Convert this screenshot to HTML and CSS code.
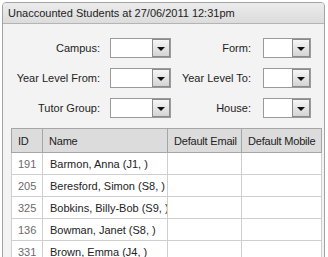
FILE: index.html
```html
<!DOCTYPE html>
<html>
<head>
<meta charset="utf-8">
<link rel="stylesheet" href="styles.css">
</head>
<body>
<div class="panel">
  <div class="panel-header">Unaccounted Students at 27/06/2011 12:31pm</div>
  <div class="panel-body">
    <div class="filters">
      <label class="lbl">Campus:</label>
      <div class="combo wide"><span class="field"></span><span class="btn"><span class="tri"></span></span></div>
      <label class="lbl">Form:</label>
      <div class="combo narrow"><span class="field"></span><span class="btn"><span class="tri"></span></span></div>

      <label class="lbl">Year Level From:</label>
      <div class="combo wide"><span class="field"></span><span class="btn"><span class="tri"></span></span></div>
      <label class="lbl">Year Level To:</label>
      <div class="combo narrow"><span class="field"></span><span class="btn"><span class="tri"></span></span></div>

      <label class="lbl">Tutor Group:</label>
      <div class="combo wide"><span class="field"></span><span class="btn"><span class="tri"></span></span></div>
      <label class="lbl">House:</label>
      <div class="combo narrow"><span class="field"></span><span class="btn"><span class="tri"></span></span></div>
    </div>

    <table class="grid">
      <colgroup>
        <col class="c-id"><col class="c-name"><col class="c-email"><col class="c-mobile">
      </colgroup>
      <thead>
        <tr><th>ID</th><th>Name</th><th>Default Email</th><th>Default Mobile</th></tr>
      </thead>
      <tbody>
        <tr><td class="id">191</td><td>Barmon, Anna (J1, )</td><td></td><td></td></tr>
        <tr><td class="id">205</td><td>Beresford, Simon (S8, )</td><td></td><td></td></tr>
        <tr><td class="id">325</td><td>Bobkins, Billy-Bob (S9, )</td><td></td><td></td></tr>
        <tr><td class="id">136</td><td>Bowman, Janet (S8, )</td><td></td><td></td></tr>
        <tr><td class="id">331</td><td>Brown, Emma (J4, )</td><td></td><td></td></tr>
      </tbody>
    </table>
  </div>
</div>
</body>
</html>
```

FILE: styles.css
```css
html, body {
  margin: 0;
  padding: 0;
  background: #ffffff;
}

body {
  font-family: "Liberation Sans", Arial, sans-serif;
  font-size: 11px;
  color: #222;
}

.panel {
  margin: 2px 0 0 2px;
  width: 321px;
  border: 1px solid #a3a3a3;
  border-radius: 4px 4px 0 0;
  background: #f3f3f3;
  overflow: hidden;
}

.panel-header {
  height: 20px;
  line-height: 21px;
  padding-left: 5px;
  background: linear-gradient(#ececec, #dcdcdc);
  border-bottom: 1px solid #b4b4b4;
  color: #222;
  font-size: 11px;
  white-space: nowrap;
}

.panel-body {
  padding: 14px 0 20px 8px;
}

.filters {
  display: grid;
  grid-template-columns: 89px 71px 80px 60px;
  grid-auto-rows: 20px;
  row-gap: 10px;
  align-items: center;
}

.lbl {
  text-align: right;
  white-space: nowrap;
  color: #222;
}

.combo {
  display: flex;
  height: 20px;
  box-sizing: border-box;
  border: 1px solid #9a9a9a;
  background: #fff;
}

.combo.wide {
  margin-left: 10px;
}

.combo.narrow {
  margin-left: 12px;
}

.combo .field {
  flex: 1;
}

.combo .btn {
  width: 16px;
  border: 1px solid #8a8a8a;
  background: linear-gradient(#f6f6f6, #d4d4d4);
  display: flex;
  align-items: center;
  justify-content: center;
}

.tri {
  width: 0;
  height: 0;
  border-left: 4px solid transparent;
  border-right: 4px solid transparent;
  border-top: 4px solid #111;
  margin-top: 2px;
}

.grid {
  margin-top: 10px;
  border-collapse: collapse;
  width: 310px;
  table-layout: fixed;
  background: #fff;
  border: 1px solid #a6a6a6;
}

.c-id { width: 31px; }
.c-name { width: 125px; }
.c-email { width: 74px; }
.c-mobile { width: 80px; }

.grid th {
  height: 23px;
  background: #dcdcdc;
  font-weight: normal;
  text-align: left;
  padding: 0 0 0 6px;
  border: 1px solid #a6a6a6;
  color: #222;
  white-space: nowrap;
  overflow: hidden;
  letter-spacing: -0.2px;
}

.grid td {
  height: 21px;
  padding: 0 0 0 7px;
  border: 1px solid #cfcfcf;
  color: #222;
  white-space: nowrap;
  overflow: hidden;
}

.grid td.id {
  color: #6a6a6a;
  padding-left: 6px;
}
```
